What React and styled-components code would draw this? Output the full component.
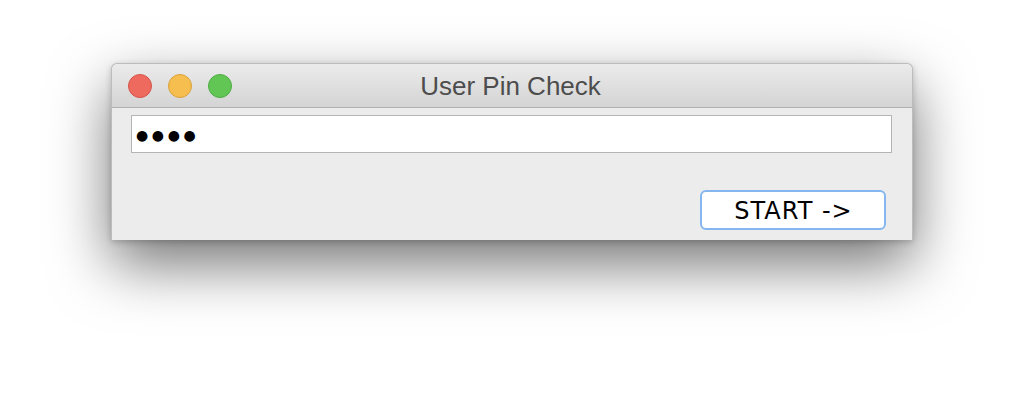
import React from 'react';
import styled, { createGlobalStyle } from 'styled-components';

const GlobalStyle = createGlobalStyle`
  html, body {
    margin: 0;
    background: #ffffff;
  }
  body {
    font-family: "Liberation Sans", Arial, sans-serif;
  }
`;

const Page = styled.div`
  width: 1024px;
  height: 400px;
  display: flex;
  justify-content: center;
  align-items: flex-start;
  padding-top: 63px;
  box-sizing: border-box;
  overflow: hidden;
`;

const Window = styled.div`
  width: 802px;
  border-radius: 6px 6px 0 0;
  border: 1px solid rgba(0, 0, 0, 0.2);
  border-bottom: none;
  box-sizing: border-box;
  box-shadow: 0 24px 60px rgba(0, 0, 0, 0.55), 0 2px 6px rgba(0, 0, 0, 0.2);
  background: #ececec;
`;

const TitleBar = styled.div`
  height: 43px;
  display: grid;
  grid-template-columns: 1fr auto 1fr;
  align-items: center;
  padding: 0 16px;
  border-radius: 6px 6px 0 0;
  background: linear-gradient(#ebebeb, #d4d4d4);
  border-bottom: 1px solid #b1b1b1;
`;

const Lights = styled.div`
  display: flex;
  gap: 16px;
`;

const Light = styled.span`
  width: 24px;
  height: 24px;
  border-radius: 50%;
  box-sizing: border-box;
  background: ${p => p.$fill};
  border: 1px solid ${p => p.$edge};
`;

const Title = styled.div`
  font-size: 26px;
  color: #4d4d4d;
  margin-right: 3px;
  margin-top: 1px;
`;

const Content = styled.div`
  height: 132px;
  box-sizing: border-box;
  display: flex;
  flex-direction: column;
  padding: 7px 20px 10px 19px;
`;

const PinField = styled.input`
  height: 38px;
  box-sizing: border-box;
  border: 1px solid #b4b4b4;
  background: #ffffff;
  padding: 1px 4px 0;
  font-family: "DejaVu Sans", sans-serif;
  font-size: 14px;
  letter-spacing: 3.6px;
  color: #000;
  outline: none;
`;

const Actions = styled.div`
  margin-top: auto;
  display: flex;
  justify-content: flex-end;
  padding-right: 6px;
`;

const StartButton = styled.button`
  width: 186px;
  height: 40px;
  box-sizing: border-box;
  border: 2px solid #86b6f0;
  border-radius: 6px;
  background: #ffffff;
  font-family: "DejaVu Sans", sans-serif;
  font-size: 24px;
  letter-spacing: 1px;
  color: #000;
  padding: 2px 0 0 1px;
`;

export default function App() {
  return (
    <>
      <GlobalStyle />
      <Page>
        <Window>
          <TitleBar>
            <Lights>
              <Light $fill="#ee6a5f" $edge="#d5534a" />
              <Light $fill="#f6be4f" $edge="#d9a23a" />
              <Light $fill="#62c655" $edge="#4fab44" />
            </Lights>
            <Title>User Pin Check</Title>
            <span />
          </TitleBar>
          <Content>
            <PinField type="text" readOnly value="●●●●" />
            <Actions>
              <StartButton>START -&gt;</StartButton>
            </Actions>
          </Content>
        </Window>
      </Page>
    </>
  );
}
